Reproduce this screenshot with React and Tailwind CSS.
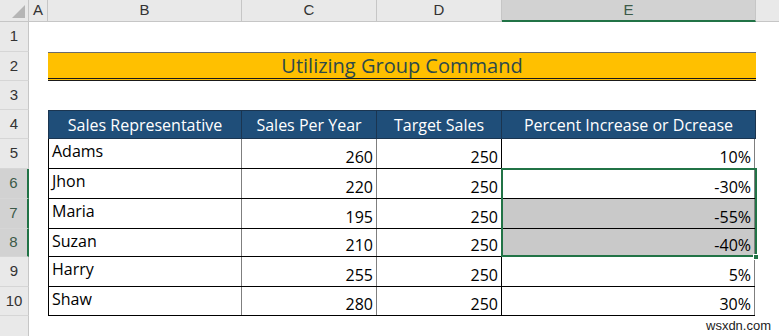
import React from 'react'

const rows = [
  { n: 5, name: 'Adams', sales: 260, target: 250, pct: '10%' },
  { n: 6, name: 'Jhon', sales: 220, target: 250, pct: '-30%' },
  { n: 7, name: 'Maria', sales: 195, target: 250, pct: '-55%', shade: true },
  { n: 8, name: 'Suzan', sales: 210, target: 250, pct: '-40%', shade: true },
  { n: 9, name: 'Harry', sales: 255, target: 250, pct: '5%' },
  { n: 10, name: 'Shaw', sales: 280, target: 250, pct: '30%' },
]

const heights = { 5: 'h-[30px]', 6: 'h-[30px]', 7: 'h-[30px]', 8: 'h-[28px]', 9: 'h-[30px]', 10: 'h-[29px]' }

function RowHead({ n, h, sel }) {
  return (
    <div
      className={`w-[29px] shrink-0 ${h} flex items-center justify-center border-b border-[#d6d6d6] text-[15px] ${
        sel ? 'bg-[#d2d2d2] text-[#3c5a48] border-r-2 border-r-[#217346]' : 'bg-[#e9e9e9] text-[#333] border-r border-r-[#c6c6c6]'
      }`}
      style={{ fontFamily: '"Liberation Sans", Arial, sans-serif' }}
    >
      {n}
    </div>
  )
}

export default function App() {
  const sheetFont = { fontFamily: '"Comic Sans MS", "Open Sans", sans-serif' }
  return (
    <div className="relative w-[779px] h-[336px] bg-white overflow-hidden">
      {/* Column headers */}
      <div
        className="flex h-[22px] text-[15px] text-[#333]"
        style={{ fontFamily: '"Liberation Sans", Arial, sans-serif' }}
      >
        <div className="w-[29px] shrink-0 bg-[#e9e9e9] border-r border-b border-[#c6c6c6] relative">
          <svg className="absolute right-[3px] bottom-[3px]" width="13" height="13" viewBox="0 0 13 13">
            <polygon points="13,0 13,13 0,13" fill="#b5b5b5" />
          </svg>
        </div>
        <div className="w-[19px] shrink-0 bg-[#e9e9e9] border-r border-b border-[#c6c6c6] flex items-center justify-center">A</div>
        <div className="w-[194px] shrink-0 bg-[#e9e9e9] border-r border-b border-[#c6c6c6] flex items-center justify-center">B</div>
        <div className="w-[135px] shrink-0 bg-[#e9e9e9] border-r border-b border-[#c6c6c6] flex items-center justify-center">C</div>
        <div className="w-[125px] shrink-0 bg-[#e9e9e9] border-r border-b border-[#c6c6c6] flex items-center justify-center">D</div>
        <div className="w-[254px] shrink-0 bg-[#d2d2d2] border-r border-r-[#c6c6c6] border-b-2 border-b-[#217346] flex items-center justify-center text-[#3c5a48]">E</div>
        <div className="flex-1 bg-[#e9e9e9] border-b border-[#c6c6c6]" />
      </div>

      {/* Row 1 */}
      <div className="flex">
        <RowHead n={1} h="h-[30px]" />
      </div>

      {/* Row 2 - title */}
      <div className="flex">
        <RowHead n={2} h="h-[29px]" />
        <div className="w-[19px] shrink-0" />
        <div
          className="w-[708px] shrink-0 h-[29px] bg-[#ffc000] border-t border-t-[#6b6b6b] border-b-[3px] border-b-[#1a1a1a] border-double flex items-center justify-center text-[20px] text-[#2d4a4a]"
          style={sheetFont}
        >
          Utilizing Group Command
        </div>
      </div>

      {/* Row 3 */}
      <div className="flex">
        <RowHead n={3} h="h-[29px]" />
      </div>

      {/* Row 4 - table header */}
      <div className="flex">
        <RowHead n={4} h="h-[29px]" />
        <div className="w-[19px] shrink-0" />
        <div className="flex h-[29px] bg-[#1f4e79] text-white text-[16px] border border-[#1b3550]" style={sheetFont}>
          <div className="w-[193px] flex items-center justify-center border-r border-[#1b3550]">Sales Representative</div>
          <div className="w-[135px] flex items-center justify-center border-r border-[#1b3550]">Sales Per Year</div>
          <div className="w-[125px] flex items-center justify-center border-r border-[#1b3550]">Target Sales</div>
          <div className="w-[253px] flex items-center justify-center">Percent Increase or Dcrease</div>
        </div>
      </div>

      {/* Data rows */}
      {rows.map((r) => (
        <div className="flex" key={r.n}>
          <RowHead n={r.n} h={heights[r.n]} sel={r.n >= 6 && r.n <= 8} />
          <div className="w-[19px] shrink-0" />
          <div className={`flex ${heights[r.n]} text-[16px] text-black border-l border-b border-black`} style={sheetFont}>
            <div className="w-[193px] flex items-start pl-[3px] border-r border-[#7f7f7f]">{r.name}</div>
            <div className="w-[135px] flex items-end justify-end pr-[3px] leading-[22px] border-r border-[#7f7f7f]">{r.sales}</div>
            <div className="w-[125px] flex items-end justify-end pr-[3px] leading-[22px] border-r border-black">{r.target}</div>
            <div className={`w-[253px] flex items-end justify-end pr-[3px] leading-[22px] border-r border-[#7f7f7f] ${r.shade ? 'bg-[#c9c9c9]' : ''}`}>{r.pct}</div>
          </div>
        </div>
      ))}

      {/* Remaining row header strip */}
      <div className="flex">
        <div className="w-[29px] shrink-0 h-[30px] bg-[#e9e9e9] border-r border-[#c6c6c6]" />
      </div>

      {/* Selection E6:E8 */}
      <div className="absolute left-[501px] top-[168px] w-[256px] h-[89px] border-2 border-[#217346] pointer-events-none" />
      <div className="absolute left-[753px] top-[254px] w-[6px] h-[6px] bg-[#217346] border border-white" />

      {/* Watermark */}
      <div
        className="absolute left-[706px] top-[316px] text-[13px] text-[#222]"
        style={{ fontFamily: '"Liberation Sans", Arial, sans-serif' }}
      >
        wsxdn.com
      </div>
    </div>
  )
}
